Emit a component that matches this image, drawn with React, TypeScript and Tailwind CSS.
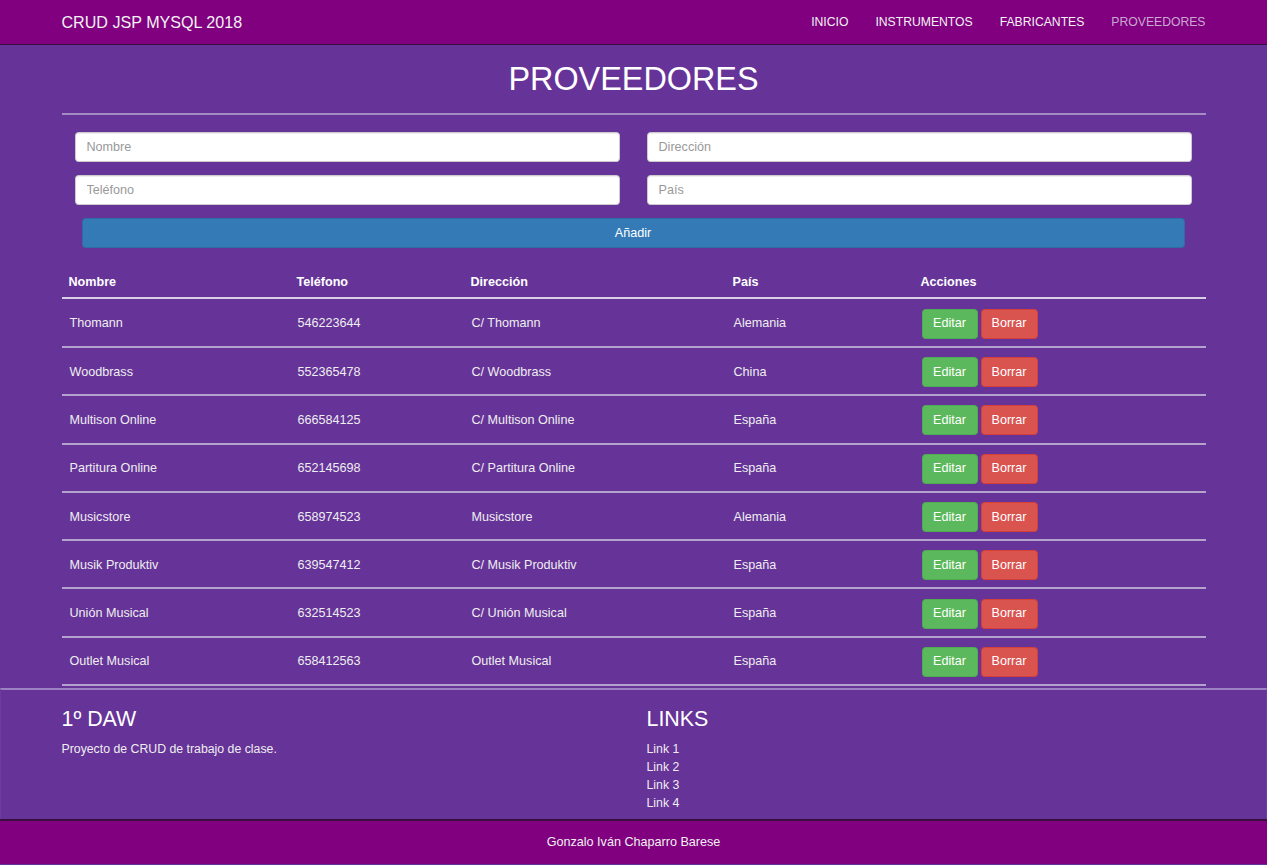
const proveedores = [
  { nombre: "Thomann", telefono: "546223644", direccion: "C/ Thomann", pais: "Alemania" },
  { nombre: "Woodbrass", telefono: "552365478", direccion: "C/ Woodbrass", pais: "China" },
  { nombre: "Multison Online", telefono: "666584125", direccion: "C/ Multison Online", pais: "España" },
  { nombre: "Partitura Online", telefono: "652145698", direccion: "C/ Partitura Online", pais: "España" },
  { nombre: "Musicstore", telefono: "658974523", direccion: "Musicstore", pais: "Alemania" },
  { nombre: "Musik Produktiv", telefono: "639547412", direccion: "C/ Musik Produktiv", pais: "España" },
  { nombre: "Unión Musical", telefono: "632514523", direccion: "C/ Unión Musical", pais: "España" },
  { nombre: "Outlet Musical", telefono: "658412563", direccion: "Outlet Musical", pais: "España" },
];

const cols = "grid grid-cols-[228px_174px_262px_188px_292px]";

function Input({ placeholder }: { placeholder: string }) {
  return (
    <input
      placeholder={placeholder}
      className="h-[30px] w-full rounded-[3.6px] border border-[#ccc] bg-white px-[11px] text-[12.6px] text-[#555] shadow-[inset_0_1px_1px_rgba(0,0,0,0.075)] outline-none placeholder:text-[#999]"
    />
  );
}

export default function App() {
  return (
    <div className="min-h-screen bg-[#663399] font-['Liberation_Sans',Arial,sans-serif] text-[12.6px] text-[#eee]">
      <nav className="h-[45px] border-b border-[#35103a] bg-[#800080]">
        <div className="mx-auto flex h-full w-[1144px] items-center justify-between">
          <span className="text-[16.1px] text-[#f2f2f2]">CRUD JSP MYSQL 2018</span>
          <ul className="flex gap-[27px] text-[12.2px] text-[#f2f2f2]">
            <li>INICIO</li>
            <li>INSTRUMENTOS</li>
            <li>FABRICANTES</li>
            <li className="text-[#c9a9cf]">PROVEEDORES</li>
          </ul>
        </div>
      </nav>

      <main className="mx-auto w-[1144px]">
        <h1 className="mt-[17px] text-center text-[32.4px] leading-[1.1] text-white">PROVEEDORES</h1>
        <hr className="mt-[15px] border-t-2 border-[#a48cc6]" />

        <form className="mt-[17px] px-[13px]">
          <div className="grid grid-cols-2 gap-x-[27px] gap-y-[13px] pr-px">
            <Input placeholder="Nombre" />
            <Input placeholder="Dirección" />
            <Input placeholder="Teléfono" />
            <Input placeholder="País" />
          </div>
          <div className="mt-[13px] px-[7px] pr-[8px]">
            <button
              type="button"
              className="h-[30px] w-full rounded-[3.6px] border border-[#2e6da4] bg-[#337ab7] pt-[2px] text-[12.6px] text-white"
            >
              Añadir
            </button>
          </div>
        </form>

        <div className="mt-[17px]">
          <div className={`${cols} h-[34px] items-center border-b-2 border-[#d8cfe4] pt-[3px] font-bold text-white`}>
            <div className="pl-[7px]">Nombre</div>
            <div className="pl-[7px]">Teléfono</div>
            <div className="pl-[7px]">Dirección</div>
            <div className="pl-[7px]">País</div>
            <div className="pl-[7px]">Acciones</div>
          </div>
          <div className="pt-px">
            {proveedores.map((p) => (
              <div key={p.nombre} className={`${cols} h-[48.3px] items-center border-b-2 border-[#b4a2cf] pt-[2px]`}>
                <div className="pl-[8px]">{p.nombre}</div>
                <div className="pl-[8px]">{p.telefono}</div>
                <div className="pl-[8px]">{p.direccion}</div>
                <div className="pl-[8px]">{p.pais}</div>
                <div className="flex gap-[3px] pl-[8px]">
                  <button type="button" className="h-[30px] w-[56px] rounded-[3.6px] border border-[#4cae4c] bg-[#5cb85c] text-white">
                    Editar
                  </button>
                  <button type="button" className="h-[30px] w-[57px] rounded-[3.6px] border border-[#d43f3a] bg-[#d9534f] text-white">
                    Borrar
                  </button>
                </div>
              </div>
            ))}
          </div>
        </div>
      </main>

      <footer className="mt-[2px]">
        <div className="border-x border-t-2 border-[#6c3c9f] border-t-[#9c82c2] pb-[7px]">
          <div className="mx-auto grid w-[1144px] grid-cols-[585px_1fr] text-[12.3px]">
            <div>
              <h3 className="mt-[18px] text-[21.4px] leading-[1.1] text-white">1º DAW</h3>
              <p className="mt-[8px] leading-[18px]">Proyecto de CRUD de trabajo de clase.</p>
            </div>
            <div>
              <h3 className="mt-[18px] text-[21.4px] leading-[1.1] text-white">LINKS</h3>
              <ul className="mt-[8px] leading-[18px]">
                <li>Link 1</li>
                <li>Link 2</li>
                <li>Link 3</li>
                <li>Link 4</li>
              </ul>
            </div>
          </div>
        </div>
        <div className="flex h-[45px] items-center justify-center border-t-2 border-[#3a0c40] bg-[#800080] text-[#f0f0f0]">
          Gonzalo Iván Chaparro Barese
        </div>
      </footer>
    </div>
  );
}
